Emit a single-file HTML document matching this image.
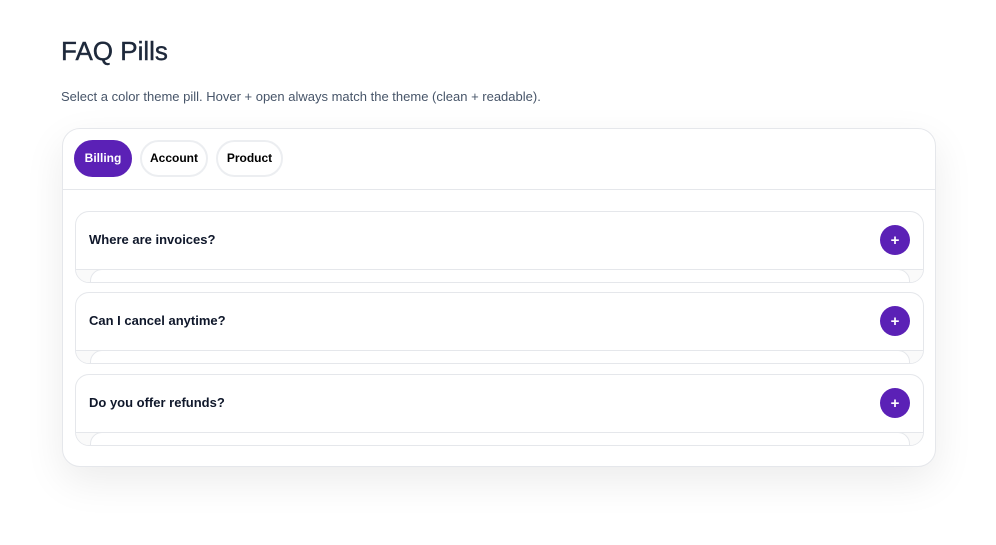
<!DOCTYPE html>
<html><head><style>
*{box-sizing:border-box;margin:0;padding:0}
body{width:996px;height:545px;background:#fff;font-family:"Liberation Sans",sans-serif;position:relative;overflow:hidden}
h1{position:absolute;left:61px;top:36px;font-size:26px;font-weight:500;color:#1e293b;-webkit-text-stroke:0.4px #1e293b}
.sub{position:absolute;left:61px;top:89px;font-size:13px;color:#475569}
.card{position:absolute;left:62px;top:128px;width:874px;height:339px;border:1px solid #e5e7eb;border-radius:18px;background:#fff;box-shadow:0 14px 40px rgba(0,0,0,0.08)}
.pill{position:absolute;top:11px;height:37px;border-radius:19px;border:2px solid #eceef1;font-size:12px;font-weight:bold;display:flex;align-items:center;justify-content:center;color:#000;padding-bottom:2px}
.pill.on{background:#5b21b6;border-color:#5b21b6;color:#fff}
.div{position:absolute;left:0;right:0;top:60px;border-top:1px solid #e5e7eb}
.item{position:absolute;left:12px;width:849px;height:72px;border:1px solid #e5e7eb;border-radius:14px;overflow:hidden}
.item .q{position:absolute;left:13px;top:20px;font-size:13px;font-weight:bold;color:#0f172a}
.item .line{position:absolute;left:0;right:0;top:57px;border-top:1px solid #e5e7eb;background:#fafafa;height:20px}
.item .panel{position:absolute;left:14px;right:13px;top:57px;height:30px;border:1px solid #e5e7eb;border-radius:12px;background:#fff}
.plus{position:absolute;right:13px;top:13px;width:30px;height:30px;border-radius:50%;background:#5b21b6;color:#fff;font-size:15px;font-weight:bold;display:flex;align-items:center;justify-content:center}
</style></head><body>
<h1>FAQ Pills</h1>
<div class="sub">Select a color theme pill. Hover + open always match the theme (clean + readable).</div>
<div class="card">
<div class="pill on" style="left:11px;width:58px">Billing</div>
<div class="pill" style="left:77px;width:68px">Account</div>
<div class="pill" style="left:153px;width:67px">Product</div>
<div class="div"></div>
<div class="item" style="top:82px"><div class="q">Where are invoices?</div><div class="line"></div><div class="panel"></div><div class="plus">+</div></div>
<div class="item" style="top:163px"><div class="q">Can I cancel anytime?</div><div class="line"></div><div class="panel"></div><div class="plus">+</div></div>
<div class="item" style="top:245px"><div class="q">Do you offer refunds?</div><div class="line"></div><div class="panel"></div><div class="plus">+</div></div>
</div>
</body></html>
